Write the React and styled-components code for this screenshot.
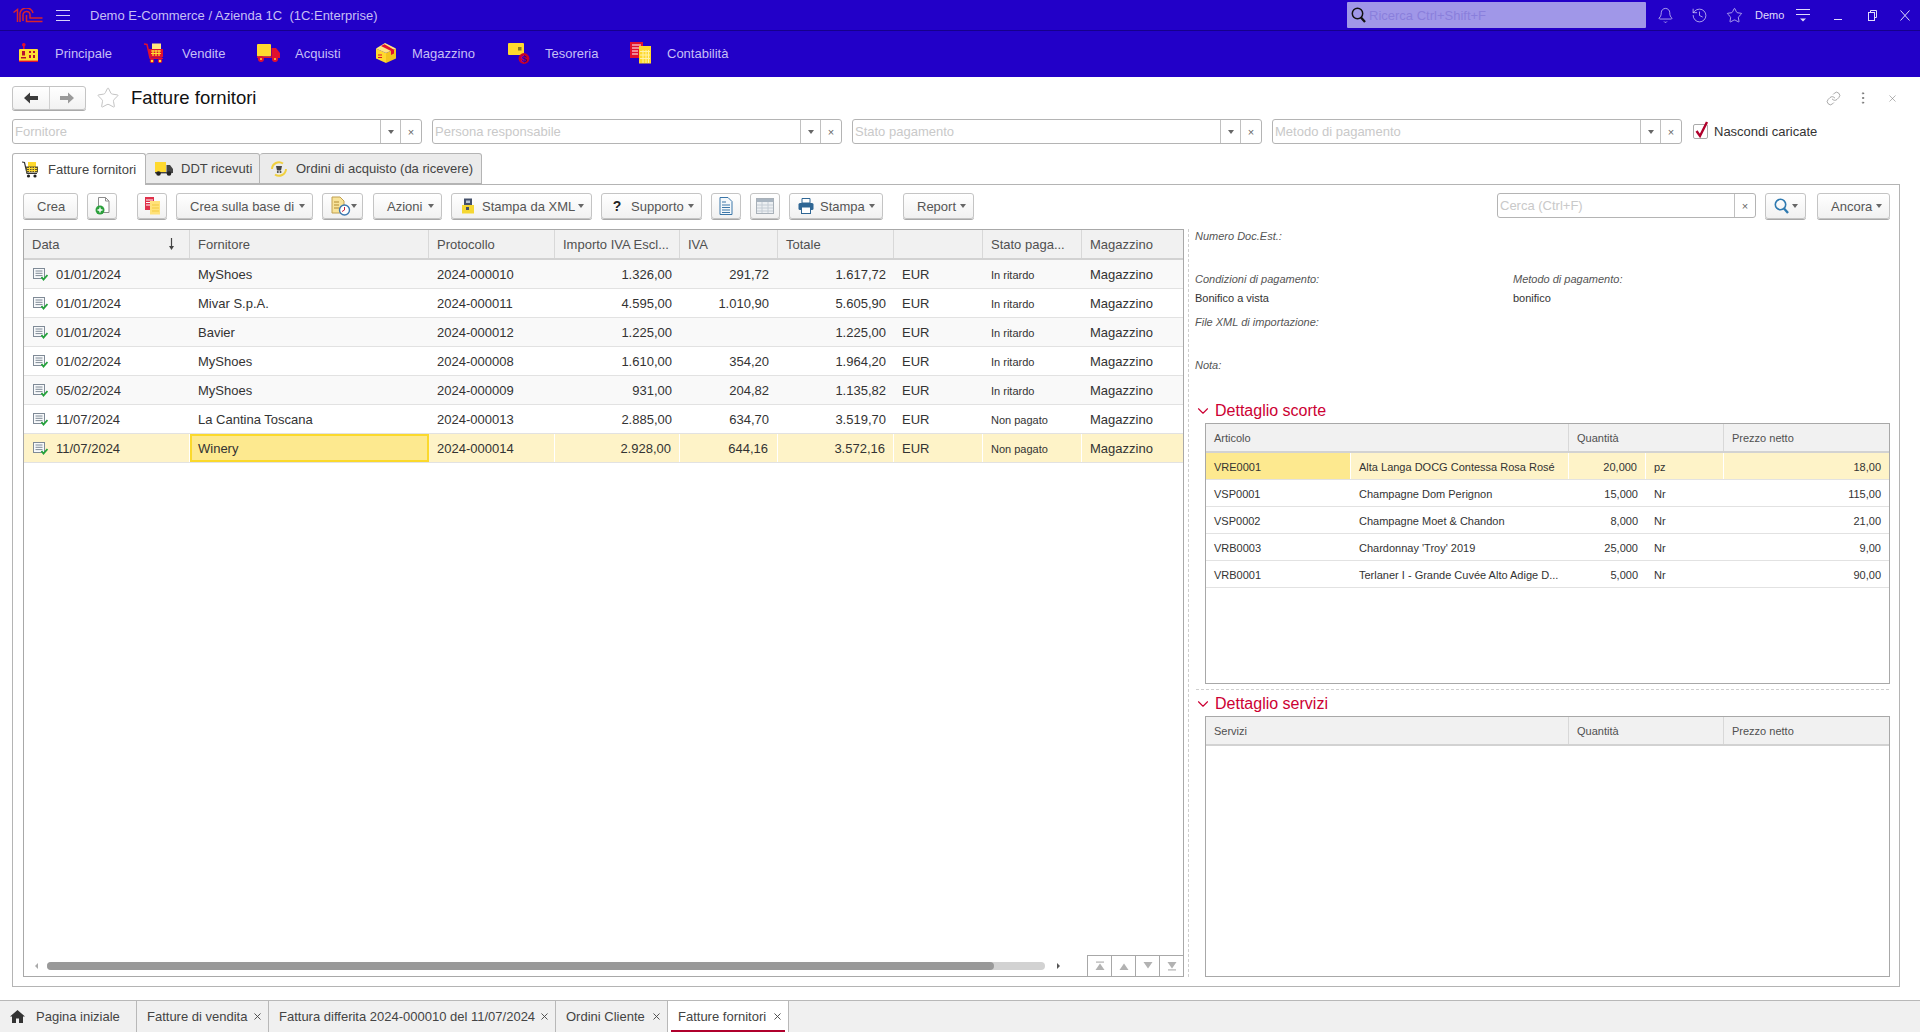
import React from "react";
import styled, { createGlobalStyle } from "styled-components";
import { Bell, History, Star, Link, MoreVertical, X, ChevronDown } from "lucide-react";

const GlobalStyle = createGlobalStyle`
  html, body {
    margin: 0;
    height: 100%;
    overflow: hidden;
    background: #fff;
    font-family: "Liberation Sans", Arial, sans-serif;
    font-size: 13px;
    color: #333;
  }
  #root { height: 100%; }
`;

const Page = styled.div`
  height: 100vh;
  display: flex;
  flex-direction: column;
`;

const TopBar = styled.div`
  height: 30px;
  flex: none;
  display: flex;
  align-items: center;
  background: #2200c8;
  border-bottom: 1px solid #16008c;
  color: #c6bff5;
`;

const LogoBox = styled.div`
  width: 56px;
  padding-left: 13px;
  box-sizing: border-box;
  display: flex;
`;

const Burger = styled.div`
  width: 34px;
  display: flex;
  flex-direction: column;
  gap: 4px;
  span {
    display: block;
    width: 14px;
    height: 1px;
    background: #d8d3fa;
  }
`;

const AppTitle = styled.div`
  white-space: pre;
`;

const GlobalSearch = styled.div`
  width: 299px;
  height: 26px;
  margin-left: auto;
  margin-right: 1px;
  background: #a097e8;
  border-radius: 1px;
  display: flex;
  align-items: center;
  padding-left: 4px;
  box-sizing: border-box;
  gap: 3px;
  color: #8a7fdc;
`;

const TopIcons = styled.div`
  display: flex;
  align-items: center;
  width: 273px;
  box-sizing: border-box;
  padding-left: 10px;
  color: #e0dcfb;
`;

const TopIcon = styled.div`
  display: flex;
  flex: none;
  width: ${(p) => p.$w || 34}px;
`;

const UserName = styled.div`
  width: 41px;
  flex: none;
  font-size: 11px;
`;

const MenuBar = styled.div`
  height: 46px;
  flex: none;
  display: flex;
  align-items: center;
  box-sizing: border-box;
  background: #2200c8;
  padding: 0 0 2px 18px;
`;

const MenuItem = styled.div`
  display: flex;
  align-items: center;
  color: #c6bff5;
  width: ${(p) => p.$w}px;
  svg { flex: none; margin-right: ${(p) => p.$gap}px; }
`;

const Content = styled.div`
  flex: 1;
  min-height: 0;
  display: flex;
  flex-direction: column;
  padding: 0 20px 13px 12px;
`;

const TitleRow = styled.div`
  height: 42px;
  flex: none;
  display: flex;
  align-items: center;
`;

const NavGroup = styled.div`
  width: 74px;
  height: 24px;
  display: flex;
  border: 1px solid #c4c4c4;
  border-radius: 3px;
  box-sizing: border-box;
  box-shadow: 0 1px 0 #aaa;
  background: linear-gradient(#fff, #f2f2f2);
`;

const NavButton = styled.div`
  flex: 1;
  display: flex;
  align-items: center;
  justify-content: center;
  & + & { border-left: 1px solid #d0d0d0; }
`;

const FavStar = styled.div`
  display: flex;
  margin: 0 11px 0 10px;
  color: #c4c4c4;
`;

const PageTitle = styled.div`
  font-size: 18.5px;
  color: #111;
`;

const TitleActions = styled.div`
  margin-left: auto;
  display: flex;
  align-items: center;
  gap: 14px;
  color: #777;
  padding-right: 2px;
`;

const ActionDots = styled.span`
  display: flex;
  margin-right: 2px;
`;

const Filters = styled.div`
  height: 25px;
  flex: none;
  display: flex;
  align-items: center;
  gap: 10px;
`;

const Field = styled.div`
  width: ${(p) => p.$w || 410}px;
  height: 25px;
  display: flex;
  box-sizing: border-box;
  border: 1px solid #b4b4b4;
  border-radius: 3px;
  background: #fff;
`;

const FieldText = styled.div`
  flex: 1;
  line-height: 23px;
  padding-left: 2px;
  color: #c9c9c9;
  white-space: nowrap;
`;

const FieldBtn = styled.div`
  width: ${(p) => p.$w || 20}px;
  flex: none;
  box-sizing: border-box;
  display: flex;
  align-items: center;
  justify-content: center;
  border-left: 1px solid #c0c0c0;
  color: #666;
  font-size: 11px;
`;

const Caret = styled.i`
  display: block;
  flex: none;
  width: 0;
  height: 0;
  border-left: 3px solid transparent;
  border-right: 3px solid transparent;
  border-top: 4px solid #666;
`;

const CheckWrap = styled.div`
  display: flex;
  align-items: center;
  gap: 6px;
  margin-left: 1px;
  color: #333;
`;

const CheckBox = styled.div`
  width: 15px;
  height: 15px;
  box-sizing: border-box;
  border: 1px solid #aaa;
  border-radius: 2px;
  position: relative;
  svg { position: absolute; left: 0; top: -4px; }
`;

const Tabs = styled.div`
  display: flex;
  flex: none;
  margin-top: 9px;
  height: 31px;
  position: relative;
  z-index: 1;
`;

const Tab = styled.div`
  width: ${(p) => p.$w}px;
  height: ${(p) => (p.$active ? 32 : 31)}px;
  box-sizing: border-box;
  display: flex;
  align-items: center;
  gap: ${(p) => (p.$active ? 10 : 8)}px;
  padding-left: ${(p) => p.$pl || 9}px;
  background: ${(p) => (p.$active ? "#fff" : "#ebebeb")};
  border: 1px solid #b4b4b4;
  border-left-width: ${(p) => (p.$first ? 1 : 0)}px;
  border-bottom-width: ${(p) => (p.$active ? 0 : 1)}px;
  border-radius: 3px 3px 0 0;
  color: #444;
  white-space: nowrap;
`;

const Panel = styled.div`
  flex: 1;
  min-height: 0;
  display: flex;
  flex-direction: column;
  border: 1px solid #b4b4b4;
  padding: 8px 9px 9px 10px;
`;

const Toolbar = styled.div`
  display: flex;
  flex: none;
  height: 26px;
  margin-bottom: 10px;
`;

const Button = styled.div`
  width: ${(p) => p.$w}px;
  margin-left: ${(p) => (p.$ml === undefined ? 9 : p.$ml)}px;
  height: 26px;
  flex: none;
  box-sizing: border-box;
  display: flex;
  align-items: center;
  justify-content: ${(p) => (p.$center ? "center" : "space-between")};
  padding: ${(p) => (p.$center ? "0" : `0 ${p.$pr || 7}px 0 ${p.$pad || 13}px`)};
  border: 1px solid #c4c4c4;
  border-radius: 3px;
  box-shadow: 0 1px 0 #a8a8a8;
  background: linear-gradient(#fff, #f1f1f1);
  color: #555;
  white-space: nowrap;
`;

const ButtonLabel = styled.span`
  display: flex;
  align-items: center;
  gap: ${(p) => p.$gap || 7}px;
`;

const Help = styled.b`
  color: #222;
  font-weight: 700;
  font-size: 14px;
  width: 12px;
  text-align: center;
`;

const SearchField = styled(Field)`
  margin-left: auto;
`;

const Split = styled.div`
  flex: 1;
  min-height: 0;
  display: flex;
`;

const GridBox = styled.div`
  display: flex;
  flex-direction: column;
  border: 1px solid #a8a8a8;
  box-sizing: border-box;
`;

const ListBox = styled(GridBox)`
  width: 1161px;
  flex: none;
`;

const GridRow = styled.div`
  display: grid;
  flex: none;
  grid-template-columns: ${(p) => p.$cols};
  height: ${(p) => p.$h}px;
  box-sizing: border-box;
  border-bottom: ${(p) => (p.$head ? "2px solid #d2d2d2" : "1px solid #e2e2e2")};
  background: ${(p) => (p.$head ? "#f1f1f1" : p.$sel ? "#fef3c8" : p.$odd ? "#f9f9f9" : "#fff")};
`;

const HeadCell = styled.div`
  display: flex;
  align-items: center;
  justify-content: space-between;
  padding: 0 ${(p) => p.$pr || 8}px 0 8px;
  border-right: 1px solid #d8d8d8;
  color: #505050;
  font-size: ${(p) => p.$size || 13}px;
  white-space: nowrap;
  overflow: hidden;
  &:last-child { border-right: 0; }
`;

const Cell = styled.div`
  display: flex;
  align-items: center;
  box-sizing: border-box;
  gap: 8px;
  padding: ${(p) => (p.$box ? 0 : 1)}px ${(p) => p.$pr || 8}px 0 ${(p) => p.$pl || 8}px;
  justify-content: ${(p) => (p.$right ? "flex-end" : "flex-start")};
  font-size: ${(p) => p.$size || 13}px;
  white-space: nowrap;
  color: #333;
  border-right: ${(p) => (p.$sel ? "1px solid #fff" : "0")};
  background: ${(p) => (p.$current ? "#fde98f" : "transparent")};
  ${(p) => (p.$box ? "border: 2px solid #fbd92c;" : "")}
  &:last-child { border-right: 0; }
`;

const ListSpace = styled.div`
  flex: 1;
`;

const ScrollRow = styled.div`
  height: 21px;
  flex: none;
  display: flex;
  align-items: center;
`;

const ScrollArrow = styled.i`
  width: 0;
  height: 0;
  flex: none;
  margin-left: ${(p) => p.$ml}px;
  border-top: 3px solid transparent;
  border-bottom: 3px solid transparent;
  border-left: ${(p) => (p.$right ? "3px solid #555" : "0")};
  border-right: ${(p) => (p.$right ? "0" : "3px solid #aaa")};
`;

const ScrollTrack = styled.div`
  width: 998px;
  height: 8px;
  margin-left: 9px;
  flex: none;
  border-radius: 4px;
  background: #d2d2d2;
`;

const ScrollThumb = styled.div`
  width: 947px;
  height: 8px;
  border-radius: 4px;
  background: #999;
`;

const Pager = styled.div`
  margin-left: auto;
  display: flex;
  height: 21px;
  border-top: 1px solid #a8a8a8;
  box-sizing: border-box;
`;

const PagerBtn = styled.div`
  width: 24px;
  box-sizing: border-box;
  display: flex;
  align-items: center;
  justify-content: center;
  border-left: 1px solid #a8a8a8;
`;

const Splitter = styled.div`
  width: 1px;
  margin: 0 5px 0 4px;
  flex: none;
  border-left: 1px dashed #cfcfcf;
`;

const Details = styled.div`
  flex: 1;
  min-width: 0;
  display: flex;
  flex-direction: column;
`;

const InfoBlock = styled.div`
  height: 43px;
  flex: none;
  display: grid;
  grid-template-columns: 318px 1fr;
  grid-auto-rows: 14px;
  row-gap: 5px;
  font-size: 11px;
  line-height: 14px;
`;

const InfoLabel = styled.div`
  font-style: italic;
  color: #555;
`;

const InfoValue = styled.div`
  color: #333;
`;

const SectionTitle = styled.div`
  height: 20px;
  flex: none;
  display: flex;
  align-items: center;
  gap: 3px;
  margin-bottom: 2px;
  font-size: 16px;
  color: #cc0033;
  svg { flex: none; margin-left: -1px; }
`;

const SectionBox = styled(GridBox)`
  margin-left: 10px;
  height: ${(p) => (p.$h ? `${p.$h}px` : "auto")};
  flex: ${(p) => (p.$h ? "none" : 1)};
`;

const HDivider = styled.div`
  flex: none;
  height: 0;
  margin: 5px 1px 4px 1px;
  border-top: 1px dashed #cfcfcf;
`;

const Footer = styled.div`
  height: 32px;
  flex: none;
  display: flex;
  background: #f0f0f0;
  border-top: 1px solid #b8b8b8;
  box-sizing: border-box;
`;

const HomeTab = styled.div`
  width: 137px;
  box-sizing: border-box;
  display: flex;
  align-items: center;
  gap: 11px;
  padding-left: 10px;
  border-right: 1px solid #b8b8b8;
  color: #444;
`;

const OpenTab = styled.div`
  width: ${(p) => p.$w}px;
  box-sizing: border-box;
  position: relative;
  display: flex;
  align-items: center;
  justify-content: space-between;
  padding: 0 5px 0 10px;
  border-right: 1px solid #b8b8b8;
  background: ${(p) => (p.$active ? "#fff" : "transparent")};
  color: #444;
  white-space: nowrap;
  &::after {
    content: "";
    display: ${(p) => (p.$active ? "block" : "none")};
    position: absolute;
    left: 3px;
    right: 3px;
    bottom: 0;
    height: 2px;
    background: #b0002c;
  }
`;

const TabClose = styled.span`
  display: flex;
  color: #444;
`;

const Logo1C = () => (
  <svg width="30" height="15" viewBox="0 0 30 15" fill="none" stroke="#d8242c" strokeWidth="1.5">
    <path d="M0.5 4.5 L4.5 1.5 V14" />
    <path d="M7 14 V7 A6.5 6 0 0 1 20 5" />
    <path d="M10 13 V7 A3.5 3.2 0 0 1 17 6.5 L17 10 H29.5" />
    <path d="M13.5 7 V13.5 H29.5" />
  </svg>
);

const MinimizeIcon = () => (
  <svg width="10" height="12" viewBox="0 0 10 12" stroke="currentColor">
    <path d="M1 10.5 H9" />
  </svg>
);

const RestoreIcon = () => (
  <svg width="9" height="11" viewBox="0 0 9 11" fill="none" stroke="currentColor">
    <path d="M2.5 2.5 V0.5 H8.5 V7.5 H6.5" />
    <rect x="0.5" y="2.5" width="6" height="8" />
  </svg>
);

const CloseIcon = () => (
  <svg width="10" height="11" viewBox="0 0 10 11" fill="none" stroke="currentColor">
    <path d="M0.5 0.5 L9.5 10.5 M9.5 0.5 L0.5 10.5" />
  </svg>
);

const SortArrow = () => (
  <svg width="9" height="12" viewBox="0 0 9 12" fill="none" stroke="#444">
    <path d="M4.5 0 V10" strokeWidth="1.2" />
    <path d="M2 8 H7 L4.5 12 Z" fill="#444" stroke="none" />
  </svg>
);

const PrincipaleIcon = () => (
  <svg width="20" height="20" viewBox="0 0 20 20">
    <rect x="5" y="1" width="1.6" height="7" fill="#e0102e" />
    <circle cx="5.8" cy="1.8" r="1.8" fill="#e0102e" />
    <rect x="1" y="6" width="19" height="13" rx="1" fill="#ffdf33" />
    <rect x="1" y="17.6" width="19" height="1.4" fill="#e0102e" />
    <rect x="4" y="8" width="3" height="4.5" fill="#b8102e" />
    <rect x="3" y="14" width="5" height="1.5" fill="#b8102e" />
    <rect x="11" y="8" width="2" height="2" fill="#b8102e" />
    <rect x="15" y="8" width="2" height="2" fill="#b8102e" />
    <rect x="11" y="12" width="2" height="3" fill="#b8102e" />
    <rect x="15" y="12" width="2" height="3" fill="#b8102e" />
  </svg>
);

const VenditeIcon = () => (
  <svg width="20" height="20" viewBox="0 0 20 20">
    <path d="M0 1 L3 1.5 L6 15 H18" fill="none" stroke="#e0102e" strokeWidth="1.5" />
    <rect x="8" y="0.5" width="9" height="6" fill="#ffe680" />
    <rect x="5" y="6" width="14" height="8" fill="#e0102e" />
    <path d="M7 8 H17 M7 10.5 H17 M9 7 V13 M12 7 V13 M15 7 V13" stroke="#ffdf33" strokeWidth="1.2" />
    <rect x="6" y="15" width="13" height="1" fill="#e0102e" />
    <circle cx="8" cy="18" r="1.8" fill="#ffdf33" stroke="#e0102e" />
    <circle cx="16" cy="18" r="1.8" fill="#ffdf33" stroke="#e0102e" />
  </svg>
);

const AcquistiIcon = () => (
  <svg width="23" height="18" viewBox="0 0 23 18">
    <rect x="0" y="0" width="14" height="12.5" rx="1" fill="#ffd92e" />
    <path d="M14.5 4 H19 L23 9 V14 H14.5 Z" fill="#e0102e" />
    <rect x="0" y="12.5" width="14.5" height="1.5" fill="#e0102e" />
    <circle cx="4" cy="15" r="3" fill="#e0102e" />
    <circle cx="4" cy="15" r="1" fill="#ffd92e" />
    <circle cx="18" cy="15" r="3" fill="#e0102e" />
    <circle cx="18" cy="15" r="1" fill="#ffd92e" />
  </svg>
);

const MagazzinoIcon = () => (
  <svg width="20" height="20" viewBox="0 0 20 20">
    <path d="M0 5.5 L10 10 V20 L0 15.5 Z" fill="#ffd92e" />
    <path d="M20 5.5 L10 10 V20 L20 15.5 Z" fill="#f2c41e" />
    <path d="M0 5.5 L9 0 L20 5.5 L10 10 Z" fill="#ffe680" />
    <path d="M5 3 L15 8 L15 12 L18 10.5 V6.7 L8.5 1.2 Z" fill="#e0102e" />
    <path d="M2 12 H6 M2 14.5 H6" stroke="#e0102e" strokeWidth="1.2" />
  </svg>
);

const TesoreriaIcon = () => (
  <svg width="22" height="21" viewBox="0 0 22 21">
    <rect x="0" y="0" width="16" height="12" rx="1" fill="#ffd92e" />
    <rect x="10" y="4" width="3.5" height="3.5" fill="#8a7a20" />
    <circle cx="16" cy="15.5" r="5.4" fill="#c4002c" />
    <text x="16" y="18.5" fontSize="9" fontWeight="700" textAnchor="middle" fill="#2200c8" fontFamily="Liberation Sans">$</text>
  </svg>
);

const ContabilitaIcon = () => (
  <svg width="22" height="22" viewBox="0 0 22 22">
    <rect x="0" y="0" width="13" height="16" fill="#e0102e" />
    <path d="M2 3 H11 M2 6 H11 M2 9 H8 M2 12 H8" stroke="#fff" strokeWidth="1.2" />
    <rect x="9" y="4" width="12" height="17.5" fill="#ffd92e" />
    <path d="M10 9.5 H20 M10 13 H20 M10 16.5 H20 M13 8 V21 M16 8 V21 M18.5 8 V21" stroke="#fff2a8" strokeWidth="1" />
  </svg>
);

const SearchGlass = ({ color = "#111", width = 1.5 }) => (
  <svg width="15" height="16" viewBox="0 0 15 16" fill="none" stroke={color} strokeWidth={width}>
    <circle cx="6.5" cy="6.5" r="5.2" />
    <path d="M10 10.5 L14 15" strokeWidth={width + 0.8} />
  </svg>
);

const PanelLinesIcon = () => (
  <svg width="14" height="14" viewBox="0 0 14 14" fill="none" stroke="#e0dcfb">
    <path d="M0 1.5 H14 M0 6.5 H14" />
    <path d="M4 10.5 H10 L7 13.5 Z" fill="#e0dcfb" stroke="none" />
  </svg>
);

const BackArrow = ({ color }) => (
  <svg width="14" height="12" viewBox="0 0 14 12" fill={color}>
    <path d="M0 6 L6 0.5 V4 H14 V8 H6 V11.5 Z" />
  </svg>
);

const ForwardArrow = ({ color }) => (
  <svg width="14" height="12" viewBox="0 0 14 12" fill={color}>
    <path d="M14 6 L8 0.5 V4 H0 V8 H8 V11.5 Z" />
  </svg>
);

const CartTabIcon = () => (
  <svg width="16" height="17" viewBox="0 0 16 17">
    <path d="M0 1 L2.5 1.5 L5 12.5 H15" fill="none" stroke="#333" strokeWidth="1.2" />
    <rect x="6" y="1" width="8" height="5" fill="#ffd92e" />
    <rect x="4" y="5.5" width="12" height="6" fill="#5c5530" />
    <path d="M5 7.5 H15 M5 9.5 H15 M7.5 6 V11 M10 6 V11 M12.5 6 V11" stroke="#ffd92e" />
    <circle cx="6.5" cy="15" r="1.6" fill="#222" />
    <circle cx="13" cy="15" r="1.6" fill="#222" />
  </svg>
);

const TruckTabIcon = () => (
  <svg width="18" height="14" viewBox="0 0 18 14">
    <rect x="0" y="0" width="11" height="10" fill="#ffd92e" />
    <path d="M11.5 3 H15 L18 7 V11 H11.5 Z" fill="#444" />
    <rect x="0" y="10" width="12" height="1.4" fill="#444" />
    <circle cx="3.5" cy="11.5" r="2.3" fill="#222" />
    <circle cx="14" cy="11.5" r="2.3" fill="#222" />
  </svg>
);

const OrdersTabIcon = () => (
  <svg width="18" height="18" viewBox="0 0 18 18" fill="none">
    <path d="M2 9 A7 7 0 0 1 13 3.5" stroke="#f0d040" strokeWidth="2" />
    <path d="M16 9 A7 7 0 0 1 5 14.5" stroke="#f0d040" strokeWidth="2" />
    <path d="M6 6 H12 L11 10.5 H7 Z" fill="#444" />
    <circle cx="7.8" cy="12" r="1" fill="#444" />
    <circle cx="10.5" cy="12" r="1" fill="#444" />
  </svg>
);

const NewDocIcon = () => (
  <svg width="15" height="18" viewBox="0 0 15 18">
    <path d="M3.5 0.5 H10.5 L14 4 V15.5 H3.5 Z" fill="#fff" stroke="#8c8c8c" />
    <path d="M10.5 0.5 V4 H14" fill="none" stroke="#8c8c8c" />
    <circle cx="5" cy="13" r="4.5" fill="#2ba03c" />
    <path d="M2.5 13 H7.5 M5 10.5 V15.5" stroke="#fff" strokeWidth="1.4" />
  </svg>
);

const BasedOnIcon = () => (
  <svg width="15" height="18" viewBox="0 0 15 18">
    <rect x="0" y="0" width="9" height="13" fill="#e0304a" />
    <path d="M1 3 H8 M1 5.5 H8 M1 8 H8" stroke="#fff" />
    <rect x="5" y="4" width="10" height="13.5" fill="#ffe27a" />
    <path d="M7 8 H14 M7 11 H14 M7 14 H14" stroke="#f2c940" />
  </svg>
);

const DocClockIcon = () => (
  <svg width="20" height="20" viewBox="0 0 20 20">
    <path d="M1 1 H9 L13 5 V17 H1 Z" fill="#f8e39a" stroke="#c0a050" />
    <path d="M3 6 H8 M3 9 H8 M3 12 H8" stroke="#b08a30" />
    <circle cx="13.5" cy="14" r="5" fill="#fff" stroke="#3b76b0" strokeWidth="1.4" />
    <path d="M13.5 11 V14 L11 15.5" stroke="#c4203a" fill="none" />
  </svg>
);

const XmlPrintIcon = () => (
  <svg width="15" height="16" viewBox="0 0 15 16">
    <rect x="3" y="0.5" width="8" height="7" fill="#44506a" />
    <rect x="5" y="2.5" width="4" height="2.5" fill="#b8c4d4" />
    <rect x="1" y="7" width="12" height="8.5" fill="#f5d732" />
    <rect x="5" y="9" width="3" height="3" fill="#44506a" />
  </svg>
);

const SheetIcon = () => (
  <svg width="14" height="18" viewBox="0 0 14 18" fill="none" stroke="#3b76a8">
    <path d="M1 0.5 H9 L13 4.5 V17.5 H1 Z" fill="#f4f8fb" />
    <path d="M3 5 H7 M3 8 H11 M3 10.5 H11 M3 13 H11 M3 15.5 H11" />
  </svg>
);

const TableIcon = () => (
  <svg width="18" height="16" viewBox="0 0 18 16">
    <rect x="0.5" y="0.5" width="17" height="15" fill="#eceff2" stroke="#a8b0b8" />
    <rect x="1" y="1" width="16" height="3" fill="#a8b4c0" />
    <path d="M1 7 H17 M1 10 H17 M1 13 H17 M6 4 V15 M12 4 V15" stroke="#c4ccd4" />
  </svg>
);

const PrinterIcon = () => (
  <svg width="16" height="16" viewBox="0 0 16 16">
    <path d="M4 0.5 H12 V5 H4 Z" fill="#fff" stroke="#2f6694" />
    <rect x="0.5" y="5" width="15" height="7" rx="1.5" fill="#2f6694" />
    <rect x="3.5" y="9" width="9" height="6.5" fill="#fff" stroke="#2f6694" />
  </svg>
);

const RowDocIcon = () => (
  <svg width="15" height="13" viewBox="0 0 15 13" fill="none">
    <rect x="0.5" y="0.5" width="11" height="10" fill="#f7f9fb" stroke="#7f8a96" />
    <path d="M2.5 3 H9.5 M2.5 5.3 H9.5 M2.5 7.6 H9.5" stroke="#7f8a96" />
    <path d="M8.5 9 L10.5 11.5 L14.5 7" stroke="#23a23a" strokeWidth="1.8" />
  </svg>
);

const PagerIcon = ({ down, stop }) => (
  <svg width="10" height="10" viewBox="0 0 10 10" fill="#b2b2b2">
    <g transform={down ? "rotate(180 5 5)" : undefined}>
      <path d="M5 2.5 L9.5 9 H0.5 Z" />
      {stop && <rect x="1" y="0.5" width="8" height="1.2" />}
    </g>
  </svg>
);

const HomeIcon = () => (
  <svg width="15" height="13" viewBox="0 0 15 13" fill="#333">
    <path d="M7.5 0 L15 6.5 H13 V13 H9 V8.5 H6 V13 H2 V6.5 H0 Z" />
  </svg>
);

const menuItems = [
  { label: "Principale", icon: <PrincipaleIcon />, w: 126, gap: 17 },
  { label: "Vendite", icon: <VenditeIcon />, w: 113, gap: 18 },
  { label: "Acquisti", icon: <AcquistiIcon />, w: 119, gap: 15 },
  { label: "Magazzino", icon: <MagazzinoIcon />, w: 132, gap: 16 },
  { label: "Tesoreria", icon: <TesoreriaIcon />, w: 122, gap: 15 },
  { label: "Contabilità", icon: <ContabilitaIcon />, w: 110, gap: 15 },
];

const listCols = "166px 239px 126px 125px 98px 116px 89px 99px 1fr";

const invoices = [
  ["01/01/2024", "MyShoes", "2024-000010", "1.326,00", "291,72", "1.617,72", "In ritardo"],
  ["01/01/2024", "Mivar S.p.A.", "2024-000011", "4.595,00", "1.010,90", "5.605,90", "In ritardo"],
  ["01/01/2024", "Bavier", "2024-000012", "1.225,00", "", "1.225,00", "In ritardo"],
  ["01/02/2024", "MyShoes", "2024-000008", "1.610,00", "354,20", "1.964,20", "In ritardo"],
  ["05/02/2024", "MyShoes", "2024-000009", "931,00", "204,82", "1.135,82", "In ritardo"],
  ["11/07/2024", "La Cantina Toscana", "2024-000013", "2.885,00", "634,70", "3.519,70", "Non pagato"],
  ["11/07/2024", "Winery", "2024-000014", "2.928,00", "644,16", "3.572,16", "Non pagato"],
];

const stockHeadCols = "363px 155px 1fr";
const stockCols = "145px 218px 77px 78px 1fr";

const stock = [
  ["VRE0001", "Alta Langa DOCG Contessa Rosa Rosé", "20,000", "pz", "18,00"],
  ["VSP0001", "Champagne Dom Perignon", "15,000", "Nr", "115,00"],
  ["VSP0002", "Champagne Moet & Chandon", "8,000", "Nr", "21,00"],
  ["VRB0003", "Chardonnay 'Troy' 2019", "25,000", "Nr", "9,00"],
  ["VRB0001", "Terlaner I - Grande Cuvée Alto Adige D...", "5,000", "Nr", "90,00"],
];

const openTabs = [
  { label: "Fatture di vendita", w: 132 },
  { label: "Fattura differita 2024-000010 del 11/07/2024", w: 287 },
  { label: "Ordini Cliente", w: 112 },
  { label: "Fatture fornitori", w: 121, active: true },
];

const filterNames = ["Fornitore", "Persona responsabile", "Stato pagamento", "Metodo di pagamento"];

function DetailHead({ title }) {
  return (
    <GridRow $head $cols={stockHeadCols} $h={29}>
      <HeadCell $size={11}>{title}</HeadCell>
      <HeadCell $size={11}>Quantità</HeadCell>
      <HeadCell $size={11}>Prezzo netto</HeadCell>
    </GridRow>
  );
}

export default function App() {
  return (
    <Page>
      <GlobalStyle />
      <TopBar>
        <LogoBox><Logo1C /></LogoBox>
        <Burger><span /><span /><span /></Burger>
        <AppTitle>Demo E-Commerce / Azienda 1C  (1C:Enterprise)</AppTitle>
        <GlobalSearch>
          <SearchGlass />
          Ricerca Ctrl+Shift+F
        </GlobalSearch>
        <TopIcons>
          <TopIcon><Bell size={17} strokeWidth={1} /></TopIcon>
          <TopIcon $w={35}><History size={17} strokeWidth={1} /></TopIcon>
          <TopIcon $w={29}><Star size={17} strokeWidth={1} /></TopIcon>
          <UserName>Demo</UserName>
          <TopIcon $w={37}><PanelLinesIcon /></TopIcon>
          <TopIcon $w={35}><MinimizeIcon /></TopIcon>
          <TopIcon $w={32}><RestoreIcon /></TopIcon>
          <TopIcon $w={10}><CloseIcon /></TopIcon>
        </TopIcons>
      </TopBar>
      <MenuBar>
        {menuItems.map((item) => (
          <MenuItem key={item.label} $w={item.w} $gap={item.gap}>
            {item.icon}
            {item.label}
          </MenuItem>
        ))}
      </MenuBar>
      <Content>
        <TitleRow>
          <NavGroup>
            <NavButton><BackArrow color="#3c3c3c" /></NavButton>
            <NavButton><ForwardArrow color="#9a9a9a" /></NavButton>
          </NavGroup>
          <FavStar><Star size={24} strokeWidth={1} /></FavStar>
          <PageTitle>Fatture fornitori</PageTitle>
          <TitleActions>
            <Link size={15} strokeWidth={1} />
            <ActionDots><MoreVertical size={16} strokeWidth={1.5} /></ActionDots>
            <X size={11} strokeWidth={1.2} />
          </TitleActions>
        </TitleRow>
        <Filters>
          {filterNames.map((name) => (
            <Field key={name}>
              <FieldText>{name}</FieldText>
              <FieldBtn><Caret /></FieldBtn>
              <FieldBtn $w={21}>×</FieldBtn>
            </Field>
          ))}
          <CheckWrap>
            <CheckBox>
              <svg width="15" height="18" viewBox="0 0 15 18" fill="none" stroke="#b0002c" strokeWidth="2.4">
                <path d="M2.5 10 L6 15 L13 1" />
              </svg>
            </CheckBox>
            Nascondi caricate
          </CheckWrap>
        </Filters>
        <Tabs>
          <Tab $w={134} $active $first><CartTabIcon />Fatture fornitori</Tab>
          <Tab $w={114}><TruckTabIcon />DDT ricevuti</Tab>
          <Tab $w={222} $pl={10}><OrdersTabIcon />Ordini di acquisto (da ricevere)</Tab>
        </Tabs>
        <Panel>
          <Toolbar>
            <Button $w={55} $ml={0}>Crea</Button>
            <Button $w={30} $center><NewDocIcon /></Button>
            <Button $w={30} $ml={20} $center><BasedOnIcon /></Button>
            <Button $w={137}>Crea sulla base di<Caret /></Button>
            <Button $w={41} $pad={8} $pr={5}><DocClockIcon /><Caret /></Button>
            <Button $w={69} $ml={10}>Azioni<Caret /></Button>
            <Button $w={141} $pad={9}><ButtonLabel $gap={6}><XmlPrintIcon />Stampa da XML</ButtonLabel><Caret /></Button>
            <Button $w={101} $pad={9}><ButtonLabel $gap={8}><Help>?</Help>Supporto</ButtonLabel><Caret /></Button>
            <Button $w={30} $center><SheetIcon /></Button>
            <Button $w={30} $center><TableIcon /></Button>
            <Button $w={94} $pad={8}><ButtonLabel $gap={6}><PrinterIcon />Stampa</ButtonLabel><Caret /></Button>
            <Button $w={71} $ml={20}>Report<Caret /></Button>
            <SearchField $w={259}>
              <FieldText>Cerca (Ctrl+F)</FieldText>
              <FieldBtn $w={21}>×</FieldBtn>
            </SearchField>
            <Button $w={41} $pad={8}><SearchGlass color="#2f7ab0" width={1.6} /><Caret /></Button>
            <Button $w={73} $ml={11}>Ancora<Caret /></Button>
          </Toolbar>
          <Split>
            <ListBox>
              <GridRow $head $cols={listCols} $h={30}>
                <HeadCell $pr={13}>Data<SortArrow /></HeadCell>
                <HeadCell>Fornitore</HeadCell>
                <HeadCell>Protocollo</HeadCell>
                <HeadCell>Importo IVA Escl...</HeadCell>
                <HeadCell>IVA</HeadCell>
                <HeadCell>Totale</HeadCell>
                <HeadCell />
                <HeadCell>Stato paga...</HeadCell>
                <HeadCell>Magazzino</HeadCell>
              </GridRow>
              {invoices.map((row, i) => {
                const sel = i === invoices.length - 1;
                return (
                  <GridRow key={row[2]} $cols={listCols} $h={29} $sel={sel} $odd={i % 2 === 0}>
                    <Cell $sel={sel} $pl={9}><RowDocIcon />{row[0]}</Cell>
                    <Cell $sel={sel} $current={sel} $box={sel} $pl={sel ? 6 : 8}>{row[1]}</Cell>
                    <Cell $sel={sel}>{row[2]}</Cell>
                    <Cell $sel={sel} $right>{row[3]}</Cell>
                    <Cell $sel={sel} $right $pr={9}>{row[4]}</Cell>
                    <Cell $sel={sel} $right>{row[5]}</Cell>
                    <Cell $sel={sel}>EUR</Cell>
                    <Cell $sel={sel} $size={11}>{row[6]}</Cell>
                    <Cell>Magazzino</Cell>
                  </GridRow>
                );
              })}
              <ListSpace />
              <ScrollRow>
                <ScrollArrow $ml={11} />
                <ScrollTrack><ScrollThumb /></ScrollTrack>
                <ScrollArrow $right $ml={12} />
                <Pager>
                  <PagerBtn><PagerIcon stop /></PagerBtn>
                  <PagerBtn><PagerIcon /></PagerBtn>
                  <PagerBtn><PagerIcon down /></PagerBtn>
                  <PagerBtn><PagerIcon down stop /></PagerBtn>
                </Pager>
              </ScrollRow>
            </ListBox>
            <Splitter />
            <Details>
              <InfoBlock><InfoLabel>Numero Doc.Est.:</InfoLabel></InfoBlock>
              <InfoBlock>
                <InfoLabel>Condizioni di pagamento:</InfoLabel>
                <InfoLabel>Metodo di pagamento:</InfoLabel>
                <InfoValue>Bonifico a vista</InfoValue>
                <InfoValue>bonifico</InfoValue>
              </InfoBlock>
              <InfoBlock><InfoLabel>File XML di importazione:</InfoLabel></InfoBlock>
              <InfoBlock><InfoLabel>Nota:</InfoLabel></InfoBlock>
              <SectionTitle><ChevronDown size={18} strokeWidth={1.5} />Dettaglio scorte</SectionTitle>
              <SectionBox $h={261}>
                <DetailHead title="Articolo" />
                {stock.map((row, i) => {
                  const sel = i === 0;
                  return (
                    <GridRow key={row[0]} $cols={stockCols} $h={27} $sel={sel}>
                      <Cell $sel={sel} $current={sel} $size={11}>{row[0]}</Cell>
                      <Cell $sel={sel} $size={11}>{row[1]}</Cell>
                      <Cell $sel={sel} $size={11} $right>{row[2]}</Cell>
                      <Cell $sel={sel} $size={11}>{row[3]}</Cell>
                      <Cell $size={11} $right>{row[4]}</Cell>
                    </GridRow>
                  );
                })}
              </SectionBox>
              <HDivider />
              <SectionTitle><ChevronDown size={18} strokeWidth={1.5} />Dettaglio servizi</SectionTitle>
              <SectionBox>
                <DetailHead title="Servizi" />
              </SectionBox>
            </Details>
          </Split>
        </Panel>
      </Content>
      <Footer>
        <HomeTab><HomeIcon />Pagina iniziale</HomeTab>
        {openTabs.map((tab) => (
          <OpenTab key={tab.label} $w={tab.w} $active={tab.active}>
            {tab.label}
            <TabClose><X size={11} strokeWidth={2} /></TabClose>
          </OpenTab>
        ))}
      </Footer>
    </Page>
  );
}
